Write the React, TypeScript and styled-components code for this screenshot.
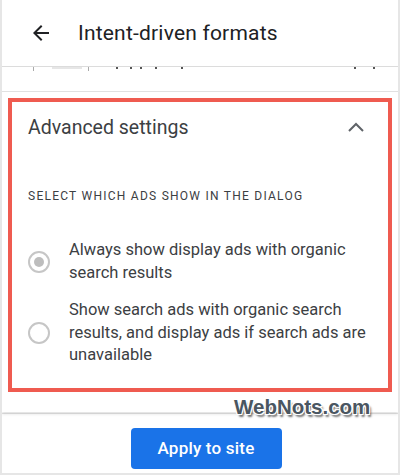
import styled, { createGlobalStyle } from "styled-components";

const GlobalStyle = createGlobalStyle`
  html, body {
    margin: 0;
    padding: 0;
    background: #ffffff;
  }
  body {
    font-family: Roboto, "Liberation Sans", Arial, sans-serif;
    color: #3c4043;
  }
`

const Frame = styled.div`
  width: 400px;
  height: 475px;
  box-sizing: border-box;
  border-left: 2px solid #e6e6e6;
  border-right: 2px solid #e6e6e6;
  border-bottom: 2px solid #e6e6e6;
  display: flex;
  flex-direction: column;
  overflow: hidden;
  position: relative;
`

const Header = styled.header`
  height: 66px;
  display: flex;
  align-items: center;
  gap: 25px;
  padding: 0 0 0 27px;
  border-bottom: 1px solid #dcdcdc;
  flex-shrink: 0;
`

const Title = styled.h1`
  margin: 0;
  font-size: 21px;
  font-weight: 400;
  color: #202124;
  letter-spacing: 0.2px;
`

const CutRow = styled.div`
  height: 24px;
  position: relative;
  flex-shrink: 0;
  border-bottom: 1px solid #e2e2e2;
`

const Speck = styled.span<{ $x: number; $w?: number; $h?: number; $c?: string }>`
  position: absolute;
  top: 0;
  left: ${(p) => p.$x}px;
  width: ${(p) => p.$w ?? 2}px;
  height: ${(p) => p.$h ?? 2}px;
  background: ${(p) => p.$c ?? "#555"};
`

const Card = styled.section`
  flex-shrink: 0;
  padding: 6px 6px 20px 6px;
  box-shadow: 0 2px 3px rgba(0, 0, 0, 0.12);
  position: relative;
  z-index: 1;
`

const Highlight = styled.div`
  border: 4px solid #ef5b50;
  padding: 0 0 21px 0;
`

const SectionHead = styled.div`
  height: 50px;
  display: flex;
  align-items: center;
  justify-content: space-between;
  padding: 0 23px 0 16px;
`

const SectionTitle = styled.h2`
  margin: 0;
  font-size: 19.5px;
  font-weight: 400;
  color: #3c4043;
`

const Overline = styled.div`
  margin: 36px 0 0 16px;
  font-size: 12px;
  letter-spacing: 1.25px;
  color: #3c4043;
  text-transform: uppercase;
  line-height: 16px;
`

const Options = styled.div`
  display: flex;
  flex-direction: column;
  gap: 15px;
  margin-top: 35px;
`

const Option = styled.label`
  display: flex;
  align-items: center;
  gap: 19px;
  padding: 0 0 0 16px;
  cursor: pointer;
`

const Radio = styled.span<{ $checked?: boolean }>`
  width: 22px;
  height: 22px;
  box-sizing: border-box;
  border-radius: 50%;
  border: 2px solid #c6c6c6;
  flex-shrink: 0;
  display: flex;
  align-items: center;
  justify-content: center;
  &::after {
    content: "";
    width: 10px;
    height: 10px;
    border-radius: 50%;
    background: #bdbdbd;
    display: ${(p) => (p.$checked ? "block" : "none")};
  }
`

const OptionText = styled.span`
  font-size: 16.5px;
  line-height: 22.5px;
  color: #3c4043;
  max-width: 305px;
`

const Footer = styled.footer`
  flex: 1;
  display: flex;
  align-items: flex-start;
  justify-content: center;
  padding-top: 14px;
  border-top: 1px solid #e4e4e4;
  margin-top: 1px;
`

const PrimaryButton = styled.button`
  width: 151px;
  height: 41px;
  border: none;
  border-radius: 4px;
  background: #1a73e8;
  color: #ffffff;
  font-family: Roboto, "Liberation Sans", Arial, sans-serif;
  font-size: 17px;
  font-weight: 500;
  letter-spacing: 0.2px;
  margin-left: 12px;
  cursor: pointer;
`

const Watermark = styled.div`
  position: absolute;
  left: 232px;
  top: 395px;
  z-index: 5;
  font-family: "Liberation Sans", Arial, sans-serif;
  font-weight: 700;
  font-size: 20.5px;
  color: #4a5661;
  text-shadow:
    -1px -1px 0 #fff, 1px -1px 0 #fff, -1px 1px 0 #fff, 1px 1px 0 #fff,
    2px 3px 2px rgba(0, 0, 0, 0.55);
`

const BackIcon = () => (
  <svg width="24" height="24" viewBox="0 0 24 24" aria-hidden>
    <path d="M20 11H7.83l5.59-5.59L12 4l-8 8 8 8 1.41-1.41L7.83 13H20v-2z" fill="#202124" />
  </svg>
)

const ChevronUp = () => (
  <svg width="18" height="12" viewBox="0 0 18 12" aria-hidden>
    <path d="M2 10 9 3l7 7" fill="none" stroke="#5f6368" strokeWidth="2" />
  </svg>
)

export default function App() {
  return (
    <>
      <GlobalStyle />
      <Frame>
        <Header>
          <BackIcon />
          <Title>Intent-driven formats</Title>
        </Header>

        <CutRow>
          <Speck $x={31} $w={1} $h={4} $c="#aaa" />
          <Speck $x={50} $w={30} $h={2} $c="#e6e6e6" />
          <Speck $x={86} $w={1} $h={4} $c="#aaa" />
          <Speck $x={114} />
          <Speck $x={128} />
          <Speck $x={138} />
          <Speck $x={153} />
          <Speck $x={179} />
          <Speck $x={352} />
          <Speck $x={371} />
        </CutRow>

        <Card>
          <Highlight>
            <SectionHead>
              <SectionTitle>Advanced settings</SectionTitle>
              <ChevronUp />
            </SectionHead>
            <Overline>Select which ads show in the dialog</Overline>
            <Options>
              <Option>
                <Radio $checked />
                <OptionText>Always show display ads with organic search results</OptionText>
              </Option>
              <Option>
                <Radio />
                <OptionText>
                  Show search ads with organic search results, and display ads if search ads are
                  unavailable
                </OptionText>
              </Option>
            </Options>
          </Highlight>
        </Card>

        <Footer>
          <PrimaryButton>Apply to site</PrimaryButton>
        </Footer>

        <Watermark>WebNots.com</Watermark>
      </Frame>
    </>
  )
}
